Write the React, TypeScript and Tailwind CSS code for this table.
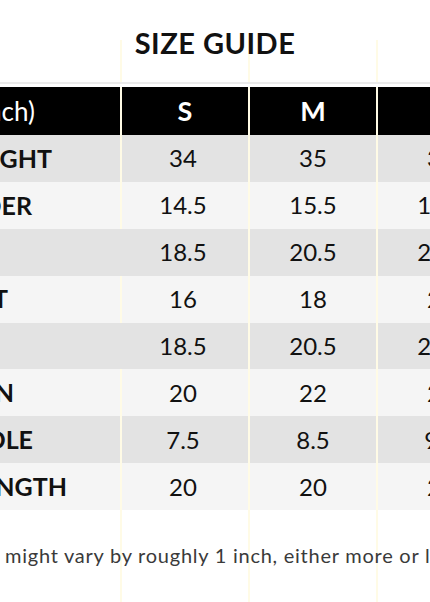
import React from 'react';

interface SizeRow {
  label: string;
  labelPad: string;
  s: string;
  m: string;
  l: string;
}

// Labels are right-anchored so the visible tail lands where the guide shows it
const rows: SizeRow[] = [
  { label: 'TOTAL LENGHT', labelPad: 'pr-[68px]', s: '34', m: '35', l: '36' },
  { label: 'SHOULDER', labelPad: 'pr-[88px]', s: '14.5', m: '15.5', l: '16.5' },
  { label: 'BUST', labelPad: 'pr-[128px]', s: '18.5', m: '20.5', l: '22.5' },
  { label: 'WAIST', labelPad: 'pr-[112px]', s: '16', m: '18', l: '20' },
  { label: 'HIP', labelPad: 'pr-[135px]', s: '18.5', m: '20.5', l: '22.5' },
  { label: 'HEM OPEN', labelPad: 'pr-[106px]', s: '20', m: '22', l: '24' },
  { label: 'ARMHOLE', labelPad: 'pr-[87px]', s: '7.5', m: '8.5', l: '9.5' },
  { label: 'SLEEVE LENGTH', labelPad: 'pr-[53px]', s: '20', m: '20', l: '20' },
];

const cols = 'grid grid-cols-[120px_126px_126px_126px] gap-x-[2px] w-[504px]';

export default function App() {
  return (
    <div
      className="relative w-full h-[602px] bg-white overflow-hidden text-[#111]"
      style={{ fontFamily: 'Lato, "Open Sans", sans-serif' }}
    >
      {/* faint column traces from the original guide */}
      <div className="absolute top-[40px] bottom-0 left-[120px] w-[2px] bg-[#fffbe6]" />
      <div className="absolute top-[40px] bottom-0 left-[248px] w-[2px] bg-[#fffbe6]" />
      <div className="absolute top-[40px] bottom-0 left-[376px] w-[2px] bg-[#fffbe6]" />

      <div className="relative pt-[25px] h-[82px]">
        <h1 className="text-center text-[29px] leading-[35px] font-bold tracking-[0.5px] text-[#111]">
          SIZE GUIDE
        </h1>
      </div>

      <div className="relative">
        <div className="h-[1.5px] bg-[#ebebeb]" />
        <div className="h-[3.5px] bg-white" />

        {/* Header */}
        <div className={`${cols} h-[48px]`}>
          <div className="bg-black flex justify-end items-center overflow-hidden pr-[85px]">
            <span className="shrink-0 whitespace-nowrap text-white text-[26px] font-normal">
              Size (inch)
            </span>
          </div>
          <div className="bg-black flex items-center justify-center text-white text-[27px] font-bold">S</div>
          <div className="bg-black flex items-center justify-center text-white text-[27px] font-bold">M</div>
          <div className="bg-black flex items-center justify-center text-white text-[27px] font-bold">L</div>
        </div>

        {/* Body */}
        {rows.map((row, i) => {
          const bg = i % 2 === 0 ? 'bg-[#e3e3e3]' : 'bg-[#f5f5f5]';
          return (
            <div key={row.label} className={`${cols} h-[46.875px]`}>
              <div className={`${bg} flex justify-end items-center overflow-hidden ${row.labelPad}`}>
                <span className="shrink-0 whitespace-nowrap text-[25px] font-bold">{row.label}</span>
              </div>
              <div className={`${bg} flex items-center justify-center text-[24px] pr-[4px]`}>{row.s}</div>
              <div className={`${bg} flex items-center justify-center text-[24px]`}>{row.m}</div>
              <div className={`${bg} flex items-center justify-center text-[24px]`}>{row.l}</div>
            </div>
          );
        })}
      </div>

      {/* Note */}
      <div className="relative pt-[33px] flex whitespace-nowrap text-[20px] leading-[24px] tracking-[0.75px] text-[#3a3a3a]">
        <div className="w-[5px] shrink-0 flex justify-end">
          <span className="shrink-0">*Actual measurements&nbsp;</span>
        </div>
        <span className="shrink-0">might vary by roughly 1 inch, either more or less.</span>
      </div>
    </div>
  );
}
